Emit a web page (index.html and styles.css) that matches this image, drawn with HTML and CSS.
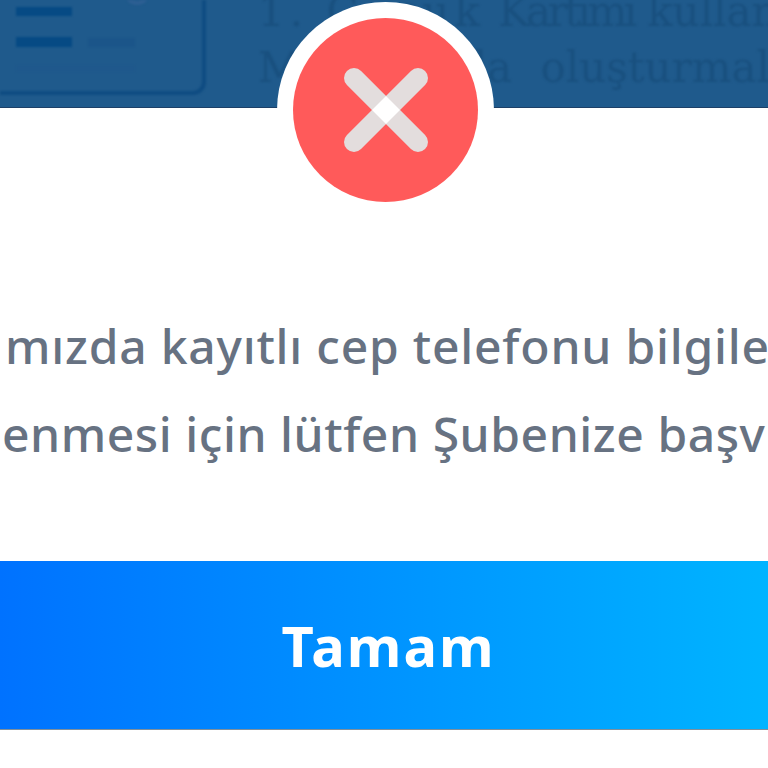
FILE: index.html
```
<!DOCTYPE html>
<html lang="tr">
<head>
<meta charset="utf-8">
<title>Hata</title>
<link rel="stylesheet" href="styles.css">
</head>
<body>
<div class="page">
  <header class="backdrop">
    <svg class="idcard" width="258" height="107" viewBox="0 0 258 107" aria-hidden="true">
      <rect x="-30" y="-40" width="234" height="133" rx="11" fill="none" stroke="#0f4c82" stroke-width="4"/>
      <circle cx="137" cy="-8" r="11" fill="none" stroke="#2d5f93" stroke-width="4"/>
      <rect x="16" y="7" width="56" height="9" fill="#064a84"/>
      <rect x="16" y="37" width="56" height="10" fill="#064a84"/>
      <rect x="88" y="38" width="47" height="9" fill="#1b5589"/>
      <rect x="16" y="65" width="119" height="7" fill="#1f588c"/>
    </svg>
    <div class="backdrop-text">
      <p class="backdrop-line"><span class="lead">1. Çocuk</span> <span class="tight">Kartımı</span> kullan</p>
      <p class="backdrop-line wide">Mobilde da oluşturmal</p>
    </div>
  </header>
  <main class="modal">
    <div class="badge">
      <svg class="badge-x" width="84" height="84" viewBox="0 0 84 84" aria-hidden="true">
        <line x1="10" y1="10" x2="74" y2="74" stroke="#e3dddd" stroke-width="20" stroke-linecap="round"/>
        <line x1="74" y1="10" x2="10" y2="74" stroke="#e3dddd" stroke-width="20" stroke-linecap="round"/>
        <polygon points="42,28 56,42 42,56 28,42" fill="#fff"/>
      </svg>
    </div>
    <div class="message">
      <p class="line line-one">mızda kayıtlı cep telefonu bilgile</p>
      <p class="line line-two">enmesi için lütfen Şubenize başv</p>
    </div>
    <button class="action" type="button">Tamam</button>
  </main>
</div>
</body>
</html>
```
FILE: styles.css
```
html, body {
  margin: 0;
  padding: 0;
  background: #fff;
}
.page {
  position: relative;
  width: 768px;
  height: 768px;
  overflow: hidden;
  font-family: "Noto Sans", sans-serif;
}
.backdrop {
  display: flex;
  height: 107px;
  background: #1f5a8c;
  border-bottom: 1px solid #1d4067;
  overflow: hidden;
}
.idcard {
  flex: none;
  display: block;
  filter: blur(.8px);
}
.backdrop-text {
  margin-top: -16px;
  white-space: nowrap;
  filter: blur(.8px);
}
.backdrop-line {
  margin: 0;
  font-family: "DejaVu Serif", serif;
  font-size: 42px;
  line-height: 56px;
  color: #19507f;
}
.lead {
  letter-spacing: 5px;
}
.tight {
  letter-spacing: -3.5px;
}
.wide {
  word-spacing: 15px;
}
.modal {
  display: flex;
  flex-direction: column;
}
.badge {
  position: absolute;
  left: 293px;
  top: 18px;
  width: 185px;
  height: 184px;
  display: flex;
  align-items: center;
  justify-content: center;
  background: #ff5a5a;
  border-radius: 50%;
  box-shadow: 0 0 0 16px #fff;
}
.badge-x {
  display: block;
}
.message {
  height: 453px;
  padding-top: 213px;
  box-sizing: border-box;
  color: #677282;
  font-size: 48px;
  font-weight: 500;
  white-space: nowrap;
}
.line {
  margin: 0;
  height: 88px;
  line-height: 50px;
}
.line-one {
  padding-left: 5px;
  letter-spacing: .78px;
}
.line-two {
  padding-left: 2px;
  letter-spacing: .55px;
}
.action {
  display: block;
  width: 768px;
  height: 169px;
  padding: 0 0 0 9px;
  border: 0;
  border-bottom: 1px solid #7f8f9c;
  background: linear-gradient(90deg, #0072ff, #00b4ff);
  color: #fff;
  font-family: "Noto Sans", sans-serif;
  font-size: 56px;
  font-weight: 700;
  letter-spacing: 2px;
}
```
